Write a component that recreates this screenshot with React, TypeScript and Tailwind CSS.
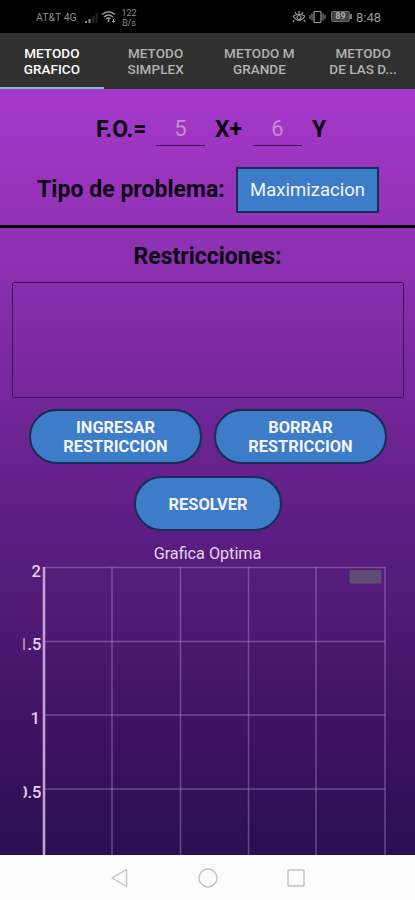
import React from "react";

const tabs: [string, string][] = [
  ["METODO", "GRAFICO"],
  ["METODO", "SIMPLEX"],
  ["METODO M", "GRANDE"],
  ["METODO", "DE LAS D..."],
];

function StatusBar() {
  return (
    <header className="flex h-[33px] shrink-0 items-center bg-black pl-[36px] pr-[32px] text-[#8c8c8c]">
      <span className="w-[41px] whitespace-nowrap pt-[2px] text-[10.5px]">AT&amp;T 4G</span>
      <svg className="ml-[7px]" width="16" height="14" viewBox="0 0 16 14">
        <path d="M1 13h2v-2H1zM4.5 13h2V9h-2z" fill="#8c8c8c" />
        <path d="M8 13h2.500V6H8zM11.500 13h2V3h-2z" fill="#242424" />
      </svg>
      <svg className="ml-[1px]" width="15" height="14" viewBox="0 0 15 14" fill="none" stroke="#999" strokeWidth="1.3">
        <path d="M1 4.500Q7.500-1 14 4.500M3 7Q7.500 3 12 7M5.200 9Q7.500 7 9.500 9" />
        <path d="M7.500 9v3M12.500 9v3M11 11l1.500 1.500L14 11M6.500 11h2" strokeWidth="1" />
      </svg>
      <span className="ml-[5px] flex w-[16px] flex-col items-center pt-[2px] text-[9px] leading-[10px]">
        <span>122</span>
        <span>B/s</span>
      </span>
      <svg className="ml-auto" width="14" height="14" viewBox="0 0 14 14" fill="none" stroke="#999" strokeWidth="1.2">
        <path d="M1 6q6 9 12 0M1 6q6-3 12 0M2 10l-1 2M7 1v3M3 2l1.500 2.500M11 2L9.500 4.500M12 10l1 2" />
        <circle cx="7" cy="7.500" r="2" />
      </svg>
      <svg className="ml-[3px]" width="17" height="14" viewBox="0 0 17 14" fill="none" stroke="#999" strokeWidth="1.2">
        <rect x="5" y="1.500" width="7" height="11" rx="1" />
        <path d="M3 3.500v7M14 3.500v7M1 5v4M16 5v4" strokeWidth="1" />
      </svg>
      <span className="ml-[5px] flex h-[11px] w-[19px] items-center justify-center rounded-[2px] border border-[#666] bg-[#444] text-[9px] font-bold leading-none text-[#aaa]">
        89
      </span>
      <span className="h-[5px] w-[2px] bg-[#777]" />
      <span className="ml-[4px] w-[27px] whitespace-nowrap pt-[2px] text-[13px] text-[#999]">8:48</span>
    </header>
  );
}

function TabBar() {
  return (
    <nav className="grid h-[56px] shrink-0 grid-cols-4 bg-[#303030]">
      {tabs.map(([top, bottom], i) => (
        <div
          key={bottom}
          className={
            "flex flex-col items-center justify-center whitespace-nowrap border-b-2 pt-[1px] text-[13.5px] font-medium leading-[16px] tracking-[0.05px] " +
            (i === 0 ? "border-[#86b9c9] text-white" : "border-[#303030] text-[#b2b2b2]")
          }
        >
          <span>{top}</span>
          <span>{bottom}</span>
        </div>
      ))}
    </nav>
  );
}

function Field({ value }: { value: string }) {
  return (
    <span className="flex h-[36px] w-[49px] items-center justify-center border-b border-[#341347] pt-[2px] text-[22px] font-normal text-[#c38ccf]">
      {value}
    </span>
  );
}

function Pill({ width, lines }: { width: string; lines: string[] }) {
  return (
    <button
      className={
        "flex h-[55px] flex-col items-center justify-center rounded-full border-2 border-[#162c51] bg-[#3d7cc8] pt-px text-[16.4px] font-bold leading-[19px] text-[#f4f4ff] " +
        width
      }
    >
      {lines.map((line) => (
        <span key={line}>{line}</span>
      ))}
    </button>
  );
}

function Chart() {
  return (
    <svg className="block" width="415" height="290" viewBox="0 565 415 290">
      <defs>
        <clipPath id="labels">
          <rect x="23.500" y="564" width="22" height="291" />
        </clipPath>
      </defs>
      <g stroke="#b48ccf" strokeOpacity="0.45" strokeWidth="1.5">
        <path d="M45 567.500H385.500M45 641.500H385M45 715H385M45 789H385" />
        <path d="M112 567V855M180.500 567V855M248.500 567V855M316 567V855M385 567V855" />
      </g>
      <path d="M44 567V855" stroke="#c3a0d4" strokeWidth="2.600" />
      <g clipPath="url(#labels)" fill="#e6d3ef" fontSize="16.500" fontWeight="500" textAnchor="end">
        <text x="41" y="576.500">2</text>
        <text x="41.500" y="650">1.5</text>
        <text x="40" y="723.500">1</text>
        <text x="41.500" y="797.500">0.5</text>
      </g>
      <rect x="349.500" y="570" width="32" height="13.500" rx="1" fill="#5f4c70" />
    </svg>
  );
}

function NavBar() {
  return (
    <footer className="flex h-[45px] shrink-0 items-center justify-between bg-[#fcfcfc] pl-[110px] pr-[109px]">
      <svg width="20" height="20" viewBox="0 0 20 20" fill="none" stroke="#c2c2c2" strokeWidth="1.4">
        <path d="M16.500 1.500v17L2 10z" strokeLinejoin="round" />
      </svg>
      <svg width="20" height="20" viewBox="0 0 20 20" fill="none" stroke="#c2c2c2" strokeWidth="1.4">
        <circle cx="10" cy="10" r="9" />
      </svg>
      <svg width="20" height="20" viewBox="0 0 20 20" fill="none" stroke="#c2c2c2" strokeWidth="1.4">
        <rect x="2" y="2" width="16" height="16" rx="1" />
      </svg>
    </footer>
  );
}

export default function App() {
  return (
    <div className="flex h-[900px] w-[415px] flex-col overflow-hidden font-[Roboto,sans-serif]">
      <StatusBar />
      <TabBar />
      <main className="flex h-[766px] shrink-0 flex-col bg-[linear-gradient(180deg,#a438ca_0%,#9b35bf_10%,#8f31b3_20%,#7d2aa3_34%,#6e2594_44%,#5b1d82_58%,#4b186f_73%,#3b1260_86%,#2a0f50_100%)]">
        <section className="flex h-[139px] shrink-0 flex-col border-b-[3px] border-black">
          <div className="flex h-[57px] items-end pl-[96px] text-[23px] font-bold leading-[33px] text-[#0b0312]">
            <span className="w-[60px] whitespace-nowrap tracking-[-0.1px]">F.O.=</span>
            <Field value="5" />
            <span className="ml-[10px] w-[38px] whitespace-nowrap">X+</span>
            <Field value="6" />
            <span className="ml-[10px]">Y</span>
          </div>
          <div className="mt-[21px] flex h-[46px] items-center pl-[37px]">
            <span className="w-[199px] whitespace-nowrap text-[23px] font-bold tracking-[0.04px] text-[#0b0312]">Tipo de problema:</span>
            <div className="flex h-[46px] w-[143px] items-center justify-center border-2 border-[#162c51] bg-[#3d7cc8] pt-[2px] text-[18.5px] text-[#f4f4ff]">
              Maximizacion
            </div>
          </div>
        </section>
        <h2 className="mt-[12px] text-center text-[23px] font-bold leading-[34px] text-[#0b0312]">Restricciones:</h2>
        <div className="ml-[12px] mt-[8px] h-[116px] w-[392px] shrink-0 rounded-[2px] border border-[#3d1455]" />
        <div className="mt-[11px] flex gap-[12px] pl-[29px]">
          <Pill width="w-[173px]" lines={["INGRESAR", "RESTRICCION"]} />
          <Pill width="w-[173px]" lines={["BORRAR", "RESTRICCION"]} />
        </div>
        <div className="mt-[12px] flex pl-[134px]">
          <Pill width="w-[148px]" lines={["RESOLVER"]} />
        </div>
        <p className="mt-[12px] h-[22px] text-center text-[16.2px] leading-[21px] text-[#e6d3ef]">Grafica Optima</p>
        <Chart />
      </main>
      <NavBar />
    </div>
  );
}
